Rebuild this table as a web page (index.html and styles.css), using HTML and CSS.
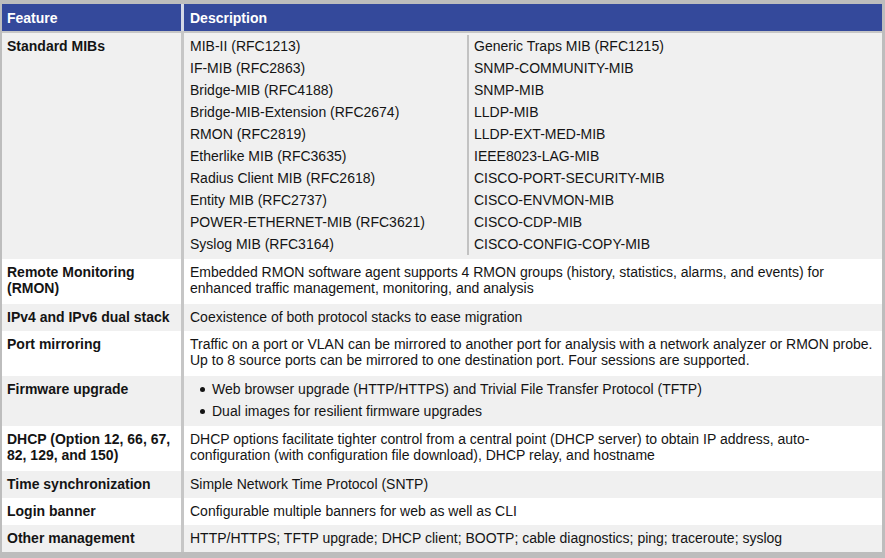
FILE: index.html
```html
<!DOCTYPE html>
<html>
<head>
<meta charset="utf-8">
<link rel="stylesheet" href="styles.css">
</head>
<body>
<div class="table">
  <div class="row head">
    <div class="feat">Feature</div>
    <div class="desc">Description</div>
  </div>
  <div class="row grey">
    <div class="feat">Standard MIBs</div>
    <div class="desc mibs">
      <ul class="mib-col left">
        <li>MIB-II (RFC1213)</li>
        <li>IF-MIB (RFC2863)</li>
        <li>Bridge-MIB (RFC4188)</li>
        <li>Bridge-MIB-Extension (RFC2674)</li>
        <li>RMON (RFC2819)</li>
        <li>Etherlike MIB (RFC3635)</li>
        <li>Radius Client MIB (RFC2618)</li>
        <li>Entity MIB (RFC2737)</li>
        <li>POWER-ETHERNET-MIB (RFC3621)</li>
        <li>Syslog MIB (RFC3164)</li>
      </ul>
      <ul class="mib-col right">
        <li>Generic Traps MIB (RFC1215)</li>
        <li>SNMP-COMMUNITY-MIB</li>
        <li>SNMP-MIB</li>
        <li>LLDP-MIB</li>
        <li>LLDP-EXT-MED-MIB</li>
        <li>IEEE8023-LAG-MIB</li>
        <li>CISCO-PORT-SECURITY-MIB</li>
        <li>CISCO-ENVMON-MIB</li>
        <li>CISCO-CDP-MIB</li>
        <li>CISCO-CONFIG-COPY-MIB</li>
      </ul>
    </div>
  </div>
  <div class="row white two">
    <div class="feat">Remote Monitoring<br>(RMON)</div>
    <div class="desc">Embedded RMON software agent supports 4 RMON groups (history, statistics, alarms, and events) for<br>enhanced traffic management, monitoring, and analysis</div>
  </div>
  <div class="row grey">
    <div class="feat">IPv4 and IPv6 dual stack</div>
    <div class="desc">Coexistence of both protocol stacks to ease migration</div>
  </div>
  <div class="row white two">
    <div class="feat">Port mirroring</div>
    <div class="desc">Traffic on a port or VLAN can be mirrored to another port for analysis with a network analyzer or RMON probe.<br>Up to 8 source ports can be mirrored to one destination port. Four sessions are supported.</div>
  </div>
  <div class="row grey">
    <div class="feat">Firmware upgrade</div>
    <div class="desc list">
      <ul class="bullets">
        <li>Web browser upgrade (HTTP/HTTPS) and Trivial File Transfer Protocol (TFTP)</li>
        <li>Dual images for resilient firmware upgrades</li>
      </ul>
    </div>
  </div>
  <div class="row white two">
    <div class="feat">DHCP (Option 12, 66, 67,<br>82, 129, and 150)</div>
    <div class="desc">DHCP options facilitate tighter control from a central point (DHCP server) to obtain IP address, auto-<br>configuration (with configuration file download), DHCP relay, and hostname</div>
  </div>
  <div class="row grey">
    <div class="feat">Time synchronization</div>
    <div class="desc">Simple Network Time Protocol (SNTP)</div>
  </div>
  <div class="row white">
    <div class="feat">Login banner</div>
    <div class="desc">Configurable multiple banners for web as well as CLI</div>
  </div>
  <div class="row grey">
    <div class="feat">Other management</div>
    <div class="desc">HTTP/HTTPS; TFTP upgrade; DHCP client; BOOTP; cable diagnostics; ping; traceroute; syslog</div>
  </div>
</div>
</body>
</html>
```

FILE: styles.css
```css
* { box-sizing: border-box; }
html, body {
  margin: 0;
  padding: 0;
  background: #ffffff;
}
body {
  font-family: "Liberation Sans", Arial, sans-serif;
  font-size: 14px;
  color: #141414;
}
.table {
  width: 885px;
  border-style: solid;
  border-color: #bdbdbd;
  border-width: 4px 3px 6px 2px;
}
.row {
  display: flex;
  white-space: nowrap;
}
.grey { background: #f0f0f0; }
.white { background: #ffffff; }
.feat {
  width: 182px;
  flex: none;
  border-right: 3px solid #c6c6c6;
  padding: 5px 5px 6px 5px;
  line-height: 16px;
  font-weight: bold;
}
.desc {
  flex: 1;
  padding: 5px 4px 6px 6px;
  line-height: 16px;
}
.two .feat, .two .desc { padding-bottom: 8px; }
.head {
  background: #34499b;
  color: #ffffff;
  border-bottom: 2px solid #c6c6c6;
}
.head .feat {
  border-right-color: #d4d8e6;
  padding: 6px 5px 5px 5px;
}
.head .desc {
  font-weight: bold;
  padding: 6px 4px 5px 6px;
}
.mibs {
  display: flex;
  padding: 2px 0 4px 0;
}
.mib-col {
  list-style: none;
  margin: 0;
  padding: 0;
  line-height: 22px;
}
.mib-col.left {
  width: 285px;
  padding-left: 6px;
  border-right: 2px solid #c2c2c2;
}
.mib-col.right {
  padding-left: 5px;
}
.list {
  padding: 2px 4px 4px 6px;
}
.bullets {
  list-style: none;
  margin: 0;
  padding: 0;
  line-height: 22px;
}
.bullets li {
  position: relative;
  padding-left: 22px;
}
.bullets li::before {
  content: "";
  position: absolute;
  left: 10px;
  top: 9px;
  width: 5px;
  height: 5px;
  border-radius: 50%;
  background: #141414;
}
```
